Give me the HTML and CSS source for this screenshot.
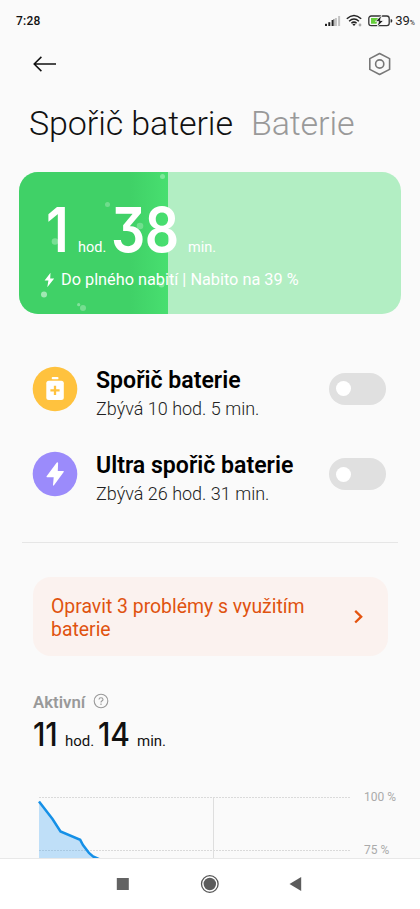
FILE: index.html
```html
<!DOCTYPE html>
<html lang="cs">
<head>
<meta charset="utf-8">
<title>Spořič baterie</title>
<link rel="stylesheet" href="styles.css">
</head>
<body>
<div class="screen">
  <header class="status">
    <span class="clock">7:28</span>
    <div class="indicators">
      <svg class="signal" width="16" height="12" viewBox="0 0 16 12"><g fill="#222"><rect x="0" y="8.8" width="2" height="2.2"/><rect x="3.3" y="7.2" width="2" height="3.8"/><rect x="6.6" y="5" width="2" height="6"/></g><g fill="#c4c4c4"><rect x="9.9" y="3" width="2" height="8"/><rect x="13.1" y="1" width="2" height="10"/></g><rect x="8.4" y="4" width="1" height="7" fill="#666"/></svg>
      <svg class="wifi" width="17" height="13" viewBox="0 0 17 13"><g fill="none" stroke="#222" stroke-width="1.5"><path d="M.8 4.8Q8 -1.8 15.2 4.8"/><path d="M3.1 7.2Q8 2.8 12.9 7.2"/><path d="M5.4 9.3Q8 7 10.6 9.3"/></g><path d="M6.4 10.3Q8 9 9.6 10.3L8 12z" fill="#222"/><circle cx="14" cy="11" r="1.4" fill="#aaa"/></svg>
      <svg class="cell" width="25" height="12" viewBox="0 0 25 12"><rect x=".8" y="1" width="20.4" height="9.6" rx="2.4" fill="#fafafa" stroke="#333" stroke-width="1.3"/><path d="M3 3h7L8.5 8.7H3z" fill="#65cf3a"/><path d="M13.8 0 7.3 6.4h3.3L9.1 12l6.6-6.5h-3.4z" fill="#222" stroke="#fafafa" stroke-width=".8"/><path d="M22.6 4.2h.6a1 1 0 0 1 1 1v1.2a1 1 0 0 1-1 1h-.6z" fill="#333"/></svg>
      <span class="percent">39<small>%</small></span>
    </div>
  </header>

  <nav class="toolbar">
    <svg width="24" height="18" viewBox="0 0 24 18" fill="none" stroke="#111" stroke-width="1.5"><path d="M2.2 9H24M9.400 1.900 2.200 9l7.200 7.100"/></svg>
    <svg width="24" height="24" viewBox="0 0 24 24" fill="none" stroke="#777" stroke-width="1.6" stroke-linejoin="round"><path d="M11.600 1.500 21.600 6.600v10.800L11.600 22.500 1.800 17.400V6.600z"/><circle cx="11.700" cy="12" r="4.100"/></svg>
  </nav>

  <div class="tabs">
    <h1 class="tab tab-active">Spořič baterie</h1>
    <span class="tab">Baterie</span>
  </div>

  <section class="charge">
    <div class="fill"></div>
    <svg class="bubbles" width="150" height="142" viewBox="0 0 150 142" fill="#fff"><circle cx="143.500" cy="4.500" r="2.500" opacity=".3"/><circle cx="88.500" cy="32.500" r="2.500" opacity=".25"/><circle cx="121" cy="54" r="3.300" opacity=".25"/><circle cx="36" cy="69.500" r="3.300" opacity=".3"/><circle cx="142.500" cy="112.500" r="3" opacity=".3"/><circle cx="25" cy="122.500" r="3" opacity=".5"/><circle cx="59.700" cy="132.700" r="1.600" opacity=".35"/><circle cx="64" cy="136" r="3" opacity=".28"/></svg>
    <div class="charge-time"><b class="c1">1</b><span class="u1">hod.</span><b class="c2">38</b><span class="u2">min.</span></div>
    <div class="charge-note"><svg width="11" height="16" viewBox="0 0 11 16" fill="#fff"><path d="M6.500.8.6 8.600h3.800L3.300 15.200 10.200 6.500H6.200z"/></svg><span>Do plného nabití | Nabito na 39 %</span></div>
  </section>

  <section class="modes">
    <div class="mode">
      <svg class="mode-icon" width="46" height="46" viewBox="0 0 46 46"><circle cx="23" cy="23" r="22.300" fill="#ffc23e"/><rect x="19.700" y="11" width="6.800" height="2.300" rx="1" fill="#fff"/><rect x="14.300" y="14.800" width="17.500" height="19.300" rx="2.500" fill="#fff"/><path d="M23 19.800v9.200M18.400 24.400h9.200" stroke="#ffc23e" stroke-width="2.300"/></svg>
      <div class="mode-text"><h2>Spořič baterie</h2><p>Zbývá 10 hod. 5 min.</p></div>
      <div class="switch"><i></i></div>
    </div>
    <div class="mode">
      <svg class="mode-icon" width="46" height="46" viewBox="0 0 46 46"><circle cx="23" cy="23" r="22.300" fill="#9b8bfb"/><path d="M24.800 11.600 14.600 25.300q-.5.9.5.9h6.600L21 34q.2 1.100 1 .3L31.700 21q.6-1-.6-1h-5.300l.3-8q-.4-1.300-1.300-.4z" fill="#fff"/></svg>
      <div class="mode-text"><h2>Ultra spořič baterie</h2><p>Zbývá 26 hod. 31 min.</p></div>
      <div class="switch"><i></i></div>
    </div>
  </section>

  <hr class="divider">

  <section class="warning">
    <p>Opravit 3 problémy s využitím baterie</p>
    <svg width="9" height="14" viewBox="0 0 9 14" fill="none" stroke="#e4540f" stroke-width="2.300"><path d="M1.200.9 7.200 6.700l-6 5.800"/></svg>
  </section>

  <section class="active">
    <div class="active-label"><span>Aktivní</span><svg width="16" height="16" viewBox="0 0 16 16" fill="none" stroke="#999" stroke-width="1.100"><circle cx="8" cy="8" r="6.800"/><path d="M6 6.500Q6 4.700 8 4.700T10 6.400Q10 7.400 8.800 8 8 8.500 8 9.500M8 10.600v1.300"/></svg></div>
    <div class="active-time"><b class="a1">11</b><span class="v1">hod.</span><b class="a2">14</b><span class="v2">min.</span></div>
  </section>

  <section class="chart">
    <svg class="plot" width="320" height="62" viewBox="0 0 320 62"><path d="M7 1.500h312M7 54.500h312" stroke="#dadada" stroke-dasharray="2 1"/><path d="M181.500 2v60" stroke="#dedede"/><path d="M7 5.500 21 23.500 28.500 35.500 48.500 44 54 54 60 60 67 63H7z" fill="#2196f3" opacity=".27"/><path d="M7 5.500 20.500 23 28.500 35.500 48.200 43.800 51 49 57 57 61 60.500 68 63.500" fill="none" stroke="#1590e7" stroke-width="2.500"/></svg>
    <div class="scale"><span>100 %</span><span>75 %</span></div>
  </section>

  <footer class="navbar">
    <svg width="420" height="50" viewBox="0 0 420 50"><rect x="116.800" y="19" width="12" height="12" fill="#636363"/><circle cx="209.800" cy="25" r="8.300" fill="none" stroke="#555" stroke-width="1.300"/><circle cx="209.800" cy="25" r="6.200" fill="#5c5c5c"/><path d="M289.500 25 301.200 18v14z" fill="#5c5c5c"/></svg>
  </footer>
</div>
</body>
</html>
```
FILE: styles.css
```css
* { box-sizing: border-box; margin: 0; padding: 0; }
body { background: #fafafa; font-family: Roboto, "Liberation Sans", sans-serif; color: #000; }
svg { display: block; flex: none; }
.screen { width: 420px; height: 909px; overflow: hidden; display: flex; flex-direction: column; background: #fafafa; }
.screen > * { flex: none; }

.status { height: 41px; padding: 0 5px 0 16px; display: flex; align-items: center; justify-content: space-between; }
.clock { font-size: 12px; font-weight: 500; letter-spacing: .25px; color: #111; padding-top: 1px; }
.indicators { display: flex; align-items: center; }
.wifi { margin-left: 5px; }
.cell { margin-left: 5px; }
.percent { margin-left: 2px; font-size: 13px; color: #222; white-space: nowrap; }
.percent small { font-size: 7px; }

.toolbar { height: 46px; padding: 0 28px 0 32px; display: flex; align-items: center; justify-content: space-between; }

.tabs { height: 85px; padding: 16px 0 0 29px; display: flex; align-items: flex-start; white-space: nowrap; }
.tab { font-size: 34px; line-height: 40px; font-weight: 300; letter-spacing: -.1px; color: #999; }
.tab-active { color: #111; margin-right: 18px; }

.charge { position: relative; margin: 0 19px; height: 142px; border-radius: 19px; background: #b2eec3; overflow: hidden; color: #fff; }
.fill { position: absolute; left: 0; top: 0; width: 39%; height: 100%; background: linear-gradient(90deg, #40d167 75%, #48df70); }
.bubbles { position: absolute; left: 0; top: 0; }
.charge-time { position: relative; height: 97px; padding: 20px 0 0 27px; display: flex; align-items: baseline; white-space: nowrap; line-height: 74px; }
.charge-time b { font-family: Inter, Roboto, sans-serif; font-size: 62.500px; font-weight: 600; font-feature-settings: "cv09"; transform: scaleX(.86); transform-origin: left; letter-spacing: -.5px; }
.charge-time span { font-size: 14.500px; }
.c1 { width: 32px; }
.u1 { width: 33px; }
.c2 { width: 77px; }
.charge-note { position: relative; display: flex; align-items: center; gap: 6px; padding-left: 25px; font-size: 16.300px; line-height: 22px; white-space: nowrap; }

.modes { padding-top: 32px; }
.mode { height: 85.500px; padding: 0 34px 0 32px; display: flex; align-items: center; }
.mode-text { flex: 1; margin-left: 18px; padding-top: 11px; white-space: nowrap; }
.mode h2 { font-size: 23.100px; line-height: 29px; font-weight: 600; }
.mode p { font-size: 18px; line-height: 28px; font-weight: 300; color: #222; }
.switch { width: 57px; height: 32px; border-radius: 16px; background: #e0e0e0; display: flex; align-items: center; padding-left: 7px; }
.switch i { width: 15px; height: 15px; border-radius: 50%; background: #fff; }

.divider { border: 0; height: 1px; margin: 25px 22px 0; background: #e6e6e6; }

.warning { margin: 34px 32px 0 33px; height: 79px; border-radius: 18px; background: #fbf2ef; padding: 0 25px 0 18px; display: flex; align-items: center; justify-content: space-between; }
.warning p { width: 280px; font-size: 19.400px; line-height: 22.500px; color: #e0530f; padding-top: 4px; }

.active { padding: 36px 0 0 33px; height: 132px; }
.active-label { display: flex; align-items: center; gap: 8px; height: 20px; font-size: 16.800px; font-weight: 600; color: #999; }
.active-label svg { position: relative; top: -1px; }
.active-time { display: flex; align-items: baseline; line-height: 46px; white-space: nowrap; color: #111; }
.active-time b { font-family: Inter, Roboto, sans-serif; font-size: 32.500px; font-weight: 500; transform: scaleX(.92); transform-origin: left; letter-spacing: -.2px; }
.active-time span { font-size: 15px; }
.a1 { width: 32px; }
.v1 { width: 33px; }
.a2 { width: 39px; }

.chart { height: 70px; padding: 8px 0 0 32px; display: flex; overflow: hidden; }
.scale { margin-left: 12px; display: flex; flex-direction: column; font-size: 12px; color: #aaa; }
.scale span { flex: none; height: 53px; position: relative; top: -6px; line-height: 14px; }

.navbar { height: 51px; border-top: 1px solid #e8e8e8; background: #fff; }
```
